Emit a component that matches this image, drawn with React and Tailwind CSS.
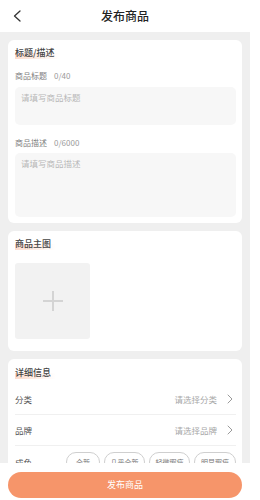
import React from 'react';

const FONT = { fontFamily: '"Noto Sans CJK SC", "Noto Sans", sans-serif' };

const SectionTitle = ({ children }) => (
  <div className="h-[12px] flex items-center">
    <span className="text-[9px] leading-[12px] font-medium text-[#444] pr-[5px] bg-[linear-gradient(to_right,#fcdccd,#fff0)] bg-[length:100%_50%] bg-bottom bg-no-repeat">
      {children}
    </span>
  </div>
);

const Chevron = () => (
  <svg width="6" height="10" viewBox="0 0 6 10" className="ml-[10px]">
    <polyline points="1,1 5,5 1,9" fill="none" stroke="#9a9a9a" strokeWidth="1" strokeLinecap="round" strokeLinejoin="round" />
  </svg>
);

const SelectRow = ({ label, placeholder }) => (
  <div className="h-[31px] flex items-center justify-between border-b border-[#f0f0f0] pr-[3px]">
    <span className="text-[8.5px] text-[#555]">{label}</span>
    <div className="flex items-center">
      <span className="text-[8.5px] text-[#a8a8a8]">{placeholder}</span>
      <Chevron />
    </div>
  </div>
);

export default function App() {
  const conditions = [
    { label: '全新', w: 'w-[34px]' },
    { label: '几乎全新', w: 'w-[41px]' },
    { label: '轻微瑕疵', w: 'w-[41px]' },
    { label: '明显瑕疵', w: 'w-[42px]' },
  ];

  return (
    <div className="w-[260px] h-[500px] bg-white overflow-hidden" style={FONT}>
      <div className="w-[250px] h-full flex flex-col">
        {/* Header */}
        <div className="h-[32px] shrink-0 grid grid-cols-[40px_1fr_40px] items-center bg-white">
          <div className="pl-[13px] flex items-center">
            <svg width="9" height="12" viewBox="0 0 9 12">
              <polyline points="7,1 1.5,6 7,11" fill="none" stroke="#333" strokeWidth="1.3" strokeLinecap="round" strokeLinejoin="round" />
            </svg>
          </div>
          <div className="text-center text-[12px] text-[#222] font-medium">发布商品</div>
          <div />
        </div>

        {/* Body */}
        <div className="flex-1 overflow-hidden bg-[#efefef] px-[8px] pt-[8px] flex flex-col gap-[8px]">
          {/* Title / description */}
          <div className="bg-white rounded-[6px] pl-[7px] pr-[6px] pt-[7px] pb-[6px] shrink-0">
            <SectionTitle>标题/描述</SectionTitle>
            <div className="mt-[11px] h-[12px] flex items-center text-[8px] text-[#808080]">
              <span>商品标题</span>
              <span className="ml-[7px] text-[#999]">0/40</span>
            </div>
            <div className="mt-[5px] h-[38px] bg-[#f7f7f7] rounded-[5px] px-[6px] pt-[4px] text-[8.5px] text-[#b8b8b8]">
              请填写商品标题
            </div>
            <div className="mt-[12px] h-[12px] flex items-center text-[8px] text-[#808080]">
              <span>商品描述</span>
              <span className="ml-[7px] text-[#999]">0/6000</span>
            </div>
            <div className="mt-[4px] h-[64px] bg-[#f7f7f7] rounded-[5px] px-[6px] pt-[4px] text-[8.5px] text-[#b8b8b8]">
              请填写商品描述
            </div>
          </div>

          {/* Main image */}
          <div className="bg-white rounded-[6px] pl-[7px] pr-[6px] pt-[7px] pb-[12px] shrink-0">
            <SectionTitle>商品主图</SectionTitle>
            <div className="mt-[13px] w-[75px] h-[76px] bg-[#f2f2f2] rounded-[3px] flex items-center justify-center">
              <svg width="22" height="22" viewBox="0 0 22 22">
                <path d="M11 1v20M1 11h20" stroke="#d4d4d4" strokeWidth="2" />
              </svg>
            </div>
          </div>

          {/* Details */}
          <div className="bg-white rounded-t-[6px] pl-[7px] pr-[6px] pt-[8px] shrink-0">
            <SectionTitle>详细信息</SectionTitle>
            <div className="mt-[5px]">
              <SelectRow label="分类" placeholder="请选择分类" />
              <SelectRow label="品牌" placeholder="请选择品牌" />
              <div className="flex items-start justify-between pt-[6px]">
                <span className="text-[8.5px] text-[#555] mt-[4px]">成色</span>
                <div className="flex gap-[4px]">
                  {conditions.map((c) => (
                    <span
                      key={c.label}
                      className={`${c.w} h-[20px] flex items-center justify-center border border-[#cfcfcf] rounded-full text-[7px] text-[#777]`}
                    >
                      {c.label}
                    </span>
                  ))}
                </div>
              </div>
            </div>
          </div>
        </div>

        {/* Bottom bar */}
        <div className="h-[37px] shrink-0 bg-white px-[8px] pt-[6px]">
          <button className="w-full h-[26px] rounded-full bg-[#f6956a] text-white text-[9px]">
            发布商品
          </button>
        </div>
      </div>
    </div>
  );
}
